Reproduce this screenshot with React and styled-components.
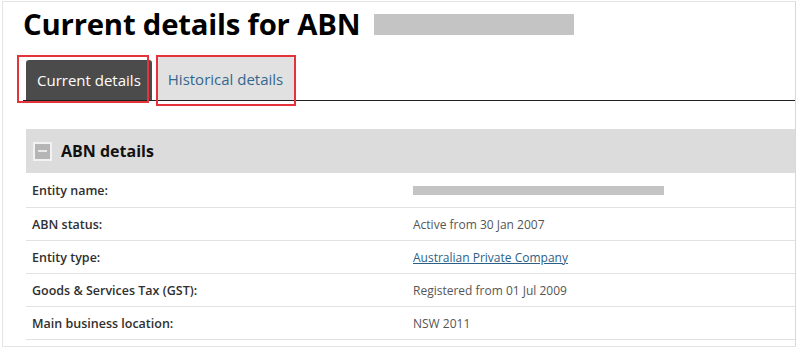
import React from 'react';
import styled, { createGlobalStyle } from 'styled-components';

const GlobalStyle = createGlobalStyle`
  html, body {
    margin: 0;
    padding: 0;
    background: #ffffff;
  }
  body {
    font-family: "Open Sans", "Liberation Sans", sans-serif;
  }
`;

const Frame = styled.div`
  box-sizing: border-box;
  margin: 1px 4px 0 2px;
  height: 346px;
  border: 1px solid #e4e4e4;
  border-right-color: #d8d8d8;
  padding: 0 0 0 20px;
  overflow: hidden;
`;

const TitleRow = styled.div`
  display: flex;
  align-items: center;
  gap: 14px;
  height: 44px;
`;

const Title = styled.h1`
  margin: 0;
  font-size: 29.3px;
  font-weight: 700;
  color: #000;
  letter-spacing: -0.2px;
`;

const Redacted = styled.span`
  display: inline-block;
  width: ${({ w }) => w}px;
  height: ${({ h }) => h}px;
  background: #c4c4c4;
`;

const TabBar = styled.div`
  display: flex;
  align-items: flex-end;
  gap: 5px;
  margin-top: 9px;
  padding-left: 3px;
  border-bottom: 1px solid #222;
  height: 45px;
`;

const TabWrap = styled.div`
  position: relative;
`;

const Tab = styled.div`
  box-sizing: border-box;
  height: ${({ active }) => (active ? 40 : 43)}px;
  padding: 0 11px;
  display: flex;
  align-items: center;
  font-size: 15px;
  border-radius: 3px 3px 0 0;
  background: ${({ active }) => (active ? '#4b4b4b' : '#e1e1e1')};
  color: ${({ active }) => (active ? '#ffffff' : '#34678f')};
`;

const Highlight = styled.div`
  position: absolute;
  left: ${({ l }) => l}px;
  top: ${({ t }) => t}px;
  right: ${({ r }) => r}px;
  bottom: ${({ b }) => b}px;
  border: 2px solid #e5333b;
  pointer-events: none;
`;

const Section = styled.div`
  margin-top: 28px;
  margin-left: 3px;
`;

const SectionHeader = styled.div`
  height: 44px;
  background: #dcdcdc;
  display: flex;
  align-items: center;
  gap: 9px;
  padding-left: 7px;
  font-size: 16px;
  font-weight: 700;
  color: #111;
`;

const Toggle = styled.span`
  box-sizing: border-box;
  width: 19px;
  height: 19px;
  border: 2px solid #f2f2f2;
  background: #b5b5b5;
  display: flex;
  align-items: center;
  justify-content: center;
  &::after {
    content: '';
    width: 9px;
    height: 2px;
    background: #e8e8e8;
  }
`;

const Row = styled.div`
  display: grid;
  grid-template-columns: 381px 1fr;
  height: ${({ tall }) => (tall ? 35 : 33)}px;
  align-items: center;
  border-bottom: 1px solid #e2e2e2;
  padding-left: 6px;
  box-sizing: border-box;
`;

const Label = styled.div`
  font-size: 12.5px;
  font-weight: 600;
  color: #2f2f2f;
`;

const Value = styled.div`
  font-size: 12px;
  color: #555;
`;

const ValueLink = styled.a`
  font-size: 12px;
  color: #2d5f86;
  text-decoration: underline;
`;

const rows = [
  { label: 'Entity name:', value: <Redacted w={251} h={9} /> },
  { label: 'ABN status:', value: 'Active from 30 Jan 2007' },
  { label: 'Entity type:', value: <ValueLink href="#">Australian Private Company</ValueLink> },
  { label: 'Goods & Services Tax (GST):', value: 'Registered from 01 Jul 2009' },
  { label: 'Main business location:', value: 'NSW 2011' },
];

export default function App() {
  return (
    <>
      <GlobalStyle />
      <Frame>
        <TitleRow>
          <Title>Current details for ABN</Title>
          <Redacted w={200} h={21} />
        </TitleRow>
        <TabBar>
          <TabWrap>
            <Tab active>Current details</Tab>
            <Highlight l={-9} t={-5} r={3} b={-3} />
          </TabWrap>
          <TabWrap>
            <Tab>Historical details</Tab>
            <Highlight l={-1} t={-2} r={-2} b={-6} />
          </TabWrap>
        </TabBar>
        <Section>
          <SectionHeader>
            <Toggle />
            ABN details
          </SectionHeader>
          {rows.map((r, i) => (
            <Row key={r.label} tall={i === 0}>
              <Label>{r.label}</Label>
              <Value>{r.value}</Value>
            </Row>
          ))}
        </Section>
      </Frame>
    </>
  );
}
